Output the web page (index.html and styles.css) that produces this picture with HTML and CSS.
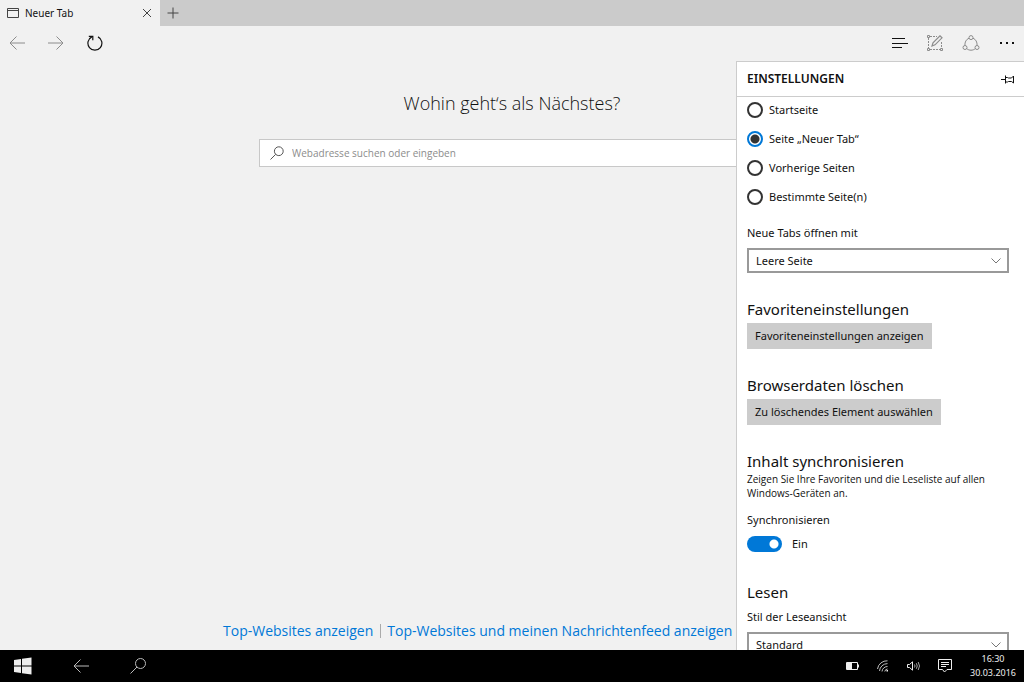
FILE: index.html
```html
<!DOCTYPE html>
<html lang="de">
<head>
<meta charset="utf-8">
<meta name="viewport" content="width=device-width, initial-scale=1">
<title>Neuer Tab</title>
<link rel="stylesheet" href="styles.css">
</head>
<body>
<div class="screen">
  <header class="tabbar">
    <div class="tab">
      <svg class="tab-icon" width="12" height="10" viewBox="0 0 12 10"><path d="M.5.5h11v9H.5zM.5 2.5h11"/></svg>
      <span class="tab-title">Neuer Tab</span>
      <button class="icon-button" aria-label="Tab schließen"><svg width="10" height="10" viewBox="0 0 10 10"><path d="M1 1l8 8M9 1L1 9"/></svg></button>
    </div>
    <button class="icon-button new-tab" aria-label="Neuer Tab"><svg width="12" height="12" viewBox="0 0 12 12"><path d="M6 .5v11M.5 6h11"/></svg></button>
  </header>

  <div class="browser">
    <nav class="toolbar">
      <div class="tools tools-nav">
        <button class="icon-button faded" aria-label="Zurück"><svg width="16" height="14" viewBox="0 0 16 14"><path d="M16 7H1M7.500.5L1 7l6.500 6.500"/></svg></button>
        <button class="icon-button faded" aria-label="Vorwärts"><svg width="16" height="14" viewBox="0 0 16 14"><path d="M0 7h15M8.500.5L15 7l-6.500 6.500"/></svg></button>
        <button class="icon-button strong" aria-label="Aktualisieren"><svg width="16" height="16" viewBox="0 0 16 16"><path d="M11 1.900A7 7 0 1 1 4.800 1.900M1.800 1.300h4v4" stroke-width="1.200"/></svg></button>
      </div>
      <div class="tools tools-actions">
        <button class="icon-button strong" aria-label="Hub"><svg width="16" height="11" viewBox="0 0 16 11"><path d="M0 .5h13M0 5.500h16M0 9.500h10" stroke-width="1.200"/></svg></button>
        <button class="icon-button faded" aria-label="Webseitennotiz"><svg width="16" height="16" viewBox="0 0 16 16"><path d="M3 1.500h7M1.500 3v10M3 14.500h10M14.500 7v6" stroke-dasharray="2 1"/><path d="M.5.5h2v2h-2zM.5 13.500h2v2h-2zM13.500 13.500h2v2h-2z"/><path d="M5 11l1-3.200L13 .8l2 2-7 7z" stroke-width="1.200"/></svg></button>
        <button class="icon-button faded" aria-label="Teilen"><svg width="18" height="16" viewBox="0 0 18 16"><circle cx="9" cy="2.600" r="2"/><circle cx="3" cy="12.500" r="2"/><circle cx="15" cy="12.500" r="2"/><path d="M7 3.200C4 4.500 2.800 7 2.900 10.500M11 3.200c3 1.300 4.200 3.800 4.100 7.300M4.700 13.700c2.500 2 6.100 2 8.600 0"/></svg></button>
        <button class="icon-button strong" aria-label="Mehr"><svg width="16" height="4" viewBox="0 0 16 4"><path class="solid" d="M1 1h2v2H1zM7 1h2v2H7zM13 1h2v2h-2z"/></svg></button>
      </div>
    </nav>

    <div class="viewport">
      <main class="page">
        <h1 class="page-title">Wohin geht‘s als Nächstes?</h1>
        <label class="search">
          <svg width="14" height="14" viewBox="0 0 14 14"><circle cx="8.800" cy="5.200" r="4.400"/><path d="M5.700 8.300L.5 13.500"/></svg>
          <input class="search-input" type="text" placeholder="Webadresse suchen oder eingeben" aria-label="Webadresse suchen oder eingeben">
        </label>
        <div class="feed-links">
          <a class="feed-link" href="#top">Top-Websites anzeigen</a>
          <a class="feed-link" href="#feed">Top-Websites und meinen Nachrichtenfeed anzeigen</a>
        </div>
      </main>

      <aside class="panel">
        <div class="panel-header">
          <h2 class="panel-title">EINSTELLUNGEN</h2>
          <button class="icon-button strong" aria-label="Anheften"><svg width="13" height="9" viewBox="0 0 13 9"><path d="M0 4.500h4.500M4.500.5v8M4.500 2.500h2l1 .5h3L12.500 1v7l-2-1.500h-3l-1 .5h-2"/></svg></button>
        </div>
        <div class="panel-body">
          <div class="radios" role="radiogroup" aria-label="Öffnen mit">
            <label class="radio"><input class="radio-input" type="radio" name="start">Startseite</label>
            <label class="radio"><input class="radio-input" type="radio" name="start" checked>Seite „Neuer Tab“</label>
            <label class="radio"><input class="radio-input" type="radio" name="start">Vorherige Seiten</label>
            <label class="radio"><input class="radio-input" type="radio" name="start">Bestimmte Seite(n)</label>
          </div>
          <div class="field field-tabs">
            <label class="field-label" for="newtabs">Neue Tabs öffnen mit</label>
            <div class="select-box">
              <select class="select" id="newtabs"><option>Leere Seite</option></select>
              <svg class="chevron" width="10" height="6" viewBox="0 0 10 6"><path d="M.5.5L5 5 9.500.5"/></svg>
            </div>
          </div>
          <section class="section">
            <h3 class="section-title">Favoriteneinstellungen</h3>
            <button class="button">Favoriteneinstellungen anzeigen</button>
          </section>
          <section class="section">
            <h3 class="section-title">Browserdaten löschen</h3>
            <button class="button">Zu löschendes Element auswählen</button>
          </section>
          <section class="section">
            <h3 class="section-title">Inhalt synchronisieren</h3>
            <p class="note">Zeigen Sie Ihre Favoriten und die Leseliste auf allen Windows-Geräten an.</p>
            <div class="field">
              <label class="field-label" for="sync">Synchronisieren</label>
              <div class="switch-row"><input class="switch" id="sync" type="checkbox" role="switch" checked><span>Ein</span></div>
            </div>
          </section>
          <section class="section section-reading">
            <h3 class="section-title">Lesen</h3>
            <div class="field field-close">
              <label class="field-label" for="reading">Stil der Leseansicht</label>
              <div class="select-box">
                <select class="select" id="reading"><option>Standard</option></select>
                <svg class="chevron" width="10" height="6" viewBox="0 0 10 6"><path d="M.5.5L5 5 9.500.5"/></svg>
              </div>
            </div>
          </section>
        </div>
      </aside>
    </div>
  </div>

  <footer class="taskbar">
    <div class="task-buttons">
      <button class="icon-button" aria-label="Start"><svg width="18" height="18" viewBox="0 0 18 18"><path class="solid" d="M0 3l7-1v6.500H0zM8 1.800L17.500.5v8H8zM0 9.500h7V16l-7-1zM8 9.500h9.500v8L8 16.200z"/></svg></button>
      <button class="icon-button thin" aria-label="Zurück"><svg width="16" height="14" viewBox="0 0 16 14"><path d="M16 7H1M7.500.5L1 7l6.500 6.500"/></svg></button>
      <button class="icon-button thin" aria-label="Suchen"><svg width="16" height="16" viewBox="0 0 16 16"><circle cx="10.500" cy="5.500" r="5"/><path d="M7 9L.5 15.500"/></svg></button>
    </div>
    <div class="tray">
      <button class="icon-button" aria-label="Akku"><svg width="13" height="8" viewBox="0 0 13 8"><path d="M.5.5h11v7H.5zM12.500 2.500v3"/><path class="solid" d="M1 1h5v6H1z"/></svg></button>
      <button class="icon-button" aria-label="WLAN"><svg width="12" height="12" viewBox="0 0 12 12"><path d="M.5 9A9.500 9.500 0 0 1 10.500.8M2.500 11A8 8 0 0 1 10.500 3.600M5 11.500a5.500 5.500 0 0 1 5.500-5M7.800 11.500a3 3 0 0 1 2.700-2.500" stroke-width=".8"/><path class="solid" d="M9.500 10h1.500v1.500H9.500z"/></svg></button>
      <button class="icon-button" aria-label="Lautstärke"><svg width="13" height="10" viewBox="0 0 13 10"><path d="M.5 3.500h2L5.500.8v8.400l-3-2.700h-2z"/><path d="M7.500 3.500q1 1.500 0 3M9.300 2.200q1.900 2.800 0 5.600M11.200 1q2.600 4 0 8" stroke-width=".7"/></svg></button>
      <button class="icon-button" aria-label="Info-Center"><svg width="14" height="14" viewBox="0 0 14 14"><path d="M.5.5h13v10H9L6.500 13l-2-2.500h-4zM3 3.500h8M3 5.500h8M3 7.500h5"/></svg></button>
      <div class="clock"><time>16:30</time><time>30.03.2016</time></div>
    </div>
  </footer>
</div>
</body>
</html>
```
FILE: styles.css
```css
* { box-sizing: border-box; }

body {
  margin: 0;
  font: 11px/18px "Noto Sans", "Open Sans", sans-serif;
  color: #111;
  background: #f1f1f1;
}

h1, h2, h3, p { margin: 0; font-weight: 400; }

button, input, select { font: inherit; color: inherit; margin: 0; }

svg { flex: none; display: block; fill: none; stroke: currentColor; }
.solid { fill: currentColor; stroke: none; }

.screen { display: flex; flex-direction: column; height: 100vh; overflow: hidden; }

.icon-button {
  display: flex;
  align-items: center;
  justify-content: center;
  padding: 0;
  border: 0;
  background: none;
  color: inherit;
}
.faded { color: #8c8c8c; }
.strong { color: #111; }
.thin { color: #bbb; }

/* Tabs */
.tabbar { display: flex; flex: none; height: 26px; background: #cbcbcb; color: #444; }
.tab {
  display: flex;
  align-items: center;
  gap: 6px;
  width: 160px;
  padding: 0 8px 0 7px;
  background: #f1f1f1;
}
.tab-title { flex: 1; font-size: 10px; color: #111; }
.new-tab { width: 26px; }

/* Toolbar */
.browser { display: flex; flex: 1; flex-direction: column; min-height: 0; }
.toolbar {
  display: flex;
  flex: none;
  align-items: center;
  justify-content: space-between;
  height: 35px;
  padding: 0 9px 1px;
}
.tools { display: flex; align-items: center; }
.tools-nav { gap: 23px; }
.tools-actions { gap: 19px; }

/* Start page */
.viewport { position: relative; flex: 1; min-height: 0; }
.page { display: flex; flex-direction: column; align-items: center; height: 100%; padding-top: 26px; }
.page-title { font-family: "Open Sans", sans-serif; font-size: 18px; font-weight: 300; line-height: 32px; }
.search {
  display: flex;
  align-items: center;
  gap: 8px;
  width: 506px;
  height: 28px;
  margin-top: 20px;
  padding: 0 10px;
  border: 1px solid #c8c8c8;
  background: #fff;
  color: #555;
}
.search-input {
  flex: 1;
  min-width: 0;
  padding: 0;
  border: 0;
  outline: 0;
  background: none;
  font-family: "Open Sans", sans-serif;
  font-size: 10px;
}
.search-input::placeholder { color: #8c8c8c; opacity: 1; }
.feed-links { display: flex; align-items: center; align-self: flex-start; margin: auto 0 12px 223px; }
.feed-link {
  padding-right: 7px;
  margin-right: 6px;
  border-right: 1px solid #aaa;
  font-family: "Open Sans", sans-serif;
  font-size: 14px;
  line-height: 14px;
  white-space: nowrap;
  color: #0078d7;
  text-decoration: none;
}

/* Settings panel, covering the right side of the page */
.panel {
  position: absolute;
  inset: 0 0 0 auto;
  width: 288px;
  overflow: hidden;
  border: solid #ccc;
  border-width: 1px 0 0 1px;
  background: #fff;
}
.panel-header {
  display: flex;
  align-items: center;
  justify-content: space-between;
  height: 35px;
  padding: 0 10px;
  border-bottom: 1px solid #ccc;
}
.panel-title { font-size: 12px; font-weight: 600; }
.panel-body { padding: 4px 15px 0 10px; }
.radios { display: grid; gap: 11px; }
.radio { display: flex; align-items: center; gap: 6px; }
.radio-input {
  appearance: none;
  width: 16px;
  height: 16px;
  border: 2px solid #333;
  border-radius: 50%;
  background: #fff;
}
.radio-input:checked { border-color: #0078d7; background: radial-gradient(circle, #333 4px, #fff 5px); }

.field { display: grid; gap: 6px; margin-top: 11px; }
.field-tabs { margin-top: 18px; }
.field-close { margin-top: 6px; }
.select-box { display: grid; align-items: center; }
.select-box > * { grid-area: 1 / 1; }
.select {
  appearance: none;
  width: 100%;
  height: 25px;
  padding: 0 7px;
  border: 2px solid #999;
  border-radius: 0;
  background: #fff;
}
.chevron { justify-self: end; margin-right: 8px; color: #777; pointer-events: none; }

.section { margin-top: 26px; }
.section-reading { margin-top: 29px; }
.section-title { font-size: 15px; line-height: 20px; }
.button { height: 26px; margin-top: 4px; padding: 0 8px; border: 0; background: #ccc; }
.note { margin-top: 1px; font-family: "Open Sans", sans-serif; font-size: 10px; line-height: 14px; }
.switch-row { display: flex; align-items: center; gap: 10px; }
.switch {
  appearance: none;
  width: 35px;
  height: 16px;
  border-radius: 8px;
  background: radial-gradient(circle at 27px 8px, #fff 4px, #0078d7 5px);
}

/* Taskbar */
.taskbar {
  display: flex;
  flex: none;
  align-items: center;
  justify-content: space-between;
  height: 32px;
  padding: 0 8px 0 14px;
  background: #000;
  color: #eee;
}
.task-buttons { display: flex; gap: 41px; }
.tray { display: flex; align-items: center; gap: 18px; }
.clock { display: grid; justify-items: center; font-size: 9px; line-height: 14px; }
```
